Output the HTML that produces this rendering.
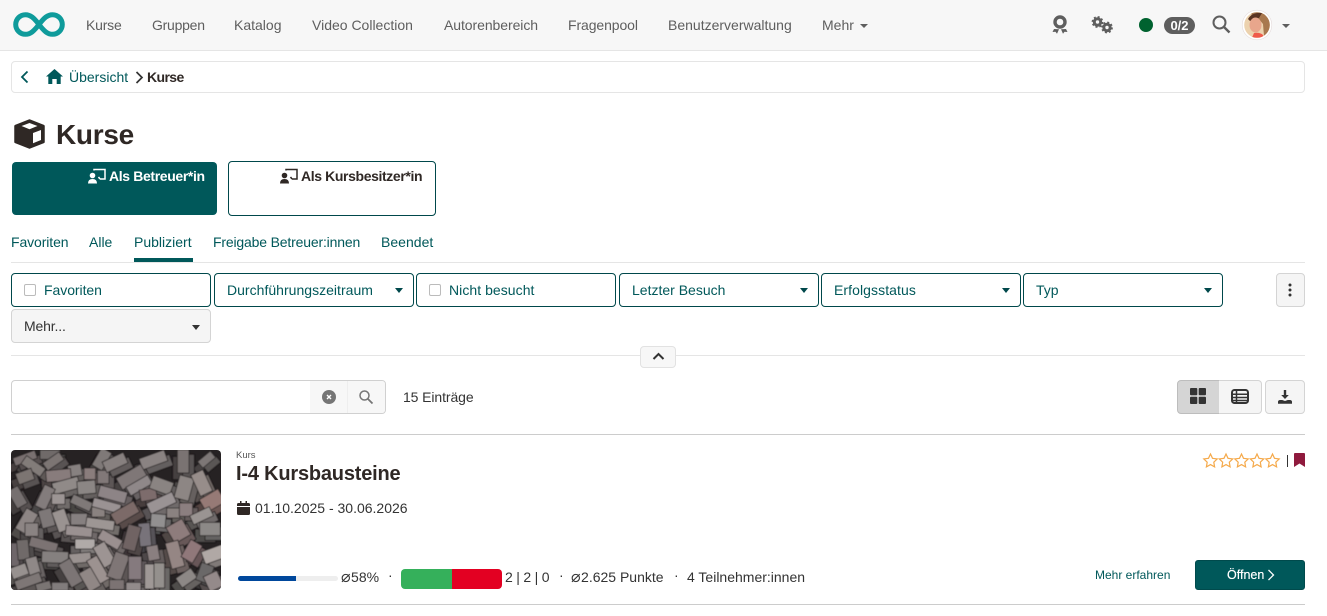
<!DOCTYPE html>
<html lang="de"><head><meta charset="utf-8"><title>Kurse</title>
<style>
html,body{margin:0;padding:0;background:#fff}
body{position:relative;width:1327px;height:616px;overflow:hidden;font-family:"Liberation Sans",Arial,sans-serif;font-size:14px;color:#333}
.a{position:absolute;box-sizing:border-box}
.t{position:absolute;white-space:nowrap;line-height:20px;height:20px}
.n{color:#5e5e5e;top:15px}
.g{color:#00585a}
.f{position:absolute;box-sizing:border-box;top:273px;height:34px;width:200px;border:1px solid #00484b;border-radius:4px}
.c{position:absolute;width:0;height:0;border-left:4px solid transparent;border-right:4px solid transparent;border-top:5px solid #00484b}
.k{position:absolute;box-sizing:border-box;top:284px;width:12px;height:12px;border:1px solid #bbb;border-radius:2px;background:#fff}
.l{position:absolute;height:1px;left:11px;width:1294px}
.d{font-size:16px;font-family:"DejaVu Sans",sans-serif;margin-right:-3.500px;line-height:14px}
svg{position:absolute;display:block;overflow:visible}
</style></head><body>

<div class="a" style="left:0;top:0;width:1327px;height:51px;background:#f7f7f7;border-bottom:1px solid #e5e5e5"></div>
<svg style="left:13px;top:12px" width="52" height="25" viewBox="0 0 52 25"><path d="M26 12.5C21 6 17.500 2.700 12.500 2.700A9.800 9.800 0 0 0 12.500 22.300C17.500 22.300 21 19 26 12.500C31 6 34.500 2.700 39.500 2.700A9.800 9.800 0 0 1 39.500 22.300C34.500 22.300 31 19 26 12.500Z" fill="none" stroke="#0f9b9b" stroke-width="5"/></svg>

<div class="t n" style="left:86px;letter-spacing:-.2px">Kurse</div>
<div class="t n" style="left:152px;letter-spacing:-.25px">Gruppen</div>
<div class="t n" style="left:234px">Katalog</div>
<div class="t n" style="left:312px">Video Collection</div>
<div class="t n" style="left:444px;letter-spacing:-.07px">Autorenbereich</div>
<div class="t n" style="left:568px;letter-spacing:-.1px">Fragenpool</div>
<div class="t n" style="left:668px">Benutzerverwaltung</div>
<div class="t n" style="left:822px">Mehr</div>
<div class="c" style="left:860px;top:24px;border-top:4px solid #5e5e5e"></div>

<svg style="left:1052px;top:15px" width="16" height="20" viewBox="0 0 16 20"><circle cx="8" cy="7" r="5" fill="none" stroke="#5e5e5e" stroke-width="3.400"/><path d="M2 14l-1.500 3 3-.3 1.500 2 2-4.500M14 14l1.500 3-3-.3-1.500 2-2-4.500" fill="#5e5e5e"/></svg>
<svg style="left:1091px;top:16px" width="22" height="18" viewBox="0 0 22 18"><g fill="none" stroke="#5e5e5e"><circle cx="6.500" cy="6" r="3.200" stroke-width="3"/><circle cx="6.500" cy="6" r="5" stroke-width="1.800" stroke-dasharray="2 1.930"/><circle cx="16" cy="11.500" r="3.200" stroke-width="3"/><circle cx="16" cy="11.500" r="5" stroke-width="1.800" stroke-dasharray="2 1.930"/></g></svg>
<div class="a" style="left:1139px;top:18px;width:14px;height:14px;border-radius:50%;background:#00622f"></div>
<div class="a" style="left:1164px;top:17px;width:31px;height:17px;border-radius:9px;background:#5e5e5e;color:#fff;font-weight:bold;font-size:13px;line-height:17px;text-align:center">0/2</div>
<svg style="left:1212px;top:15px" width="19" height="19" viewBox="0 0 19 19"><circle cx="7.500" cy="7.500" r="6" fill="none" stroke="#5e5e5e" stroke-width="2"/><path d="M12 12l5.500 5.500" stroke="#5e5e5e" stroke-width="2.400"/></svg>

<svg style="left:1242px;top:10px" width="30" height="30" viewBox="0 0 30 30">
<defs><clipPath id="av"><circle cx="15" cy="15" r="12.800"/></clipPath></defs>
<circle cx="15" cy="15" r="14.800" fill="#fff" stroke="#e4dcdc" stroke-width=".6"/>
<g clip-path="url(#av)"><rect width="30" height="30" fill="#ecd2ae"/><path d="M9 1h13l6 9v15l-6 1-1-12-5-6-6 0z" fill="#a8784e"/><path d="M6 9q4-7 14-6l-3 5-9 3z" fill="#5a3423"/><ellipse cx="13.500" cy="15" rx="6" ry="7.500" fill="#e8a68c"/><path d="M12 23q6-1 9 2l2 5H9z" fill="#ef5a4a"/></g>
</svg>
<div class="c" style="left:1282px;top:24px;border-top:4px solid #5e5e5e"></div>

<div class="a" style="left:11px;top:61px;width:1294px;height:32px;border:1px solid #e5e5e5;border-radius:4px"></div>
<svg style="left:20px;top:70px" width="10" height="14" viewBox="0 0 10 14"><path d="M7.500 1.500L2 7l5.500 5.500" fill="none" stroke="#00585a" stroke-width="1.800"/></svg>
<svg style="left:46px;top:69px" width="17" height="15" viewBox="0 0 17 15"><path d="M8.500 0L17 7.500h-2.300V15h-4v-5H6.300v5h-4V7.500H0z" fill="#00585a"/></svg>
<div class="t g" style="left:69px;top:67px">Übersicht</div>
<svg style="left:135px;top:71px" width="9" height="13" viewBox="0 0 9 13"><path d="M1.500 1L7 6.500 1.500 12" fill="none" stroke="#333" stroke-width="1.700"/></svg>
<div class="t" style="left:147px;top:67px;font-weight:bold;color:#2f2825;letter-spacing:-.6px">Kurse</div>

<svg style="left:14px;top:119px" width="31" height="30" viewBox="0 0 31 30"><path d="M15.500 1.500L29.500 7v16l-14 5.500L1.500 23V7z" fill="#2f2825" stroke="#2f2825" stroke-width="2.500" stroke-linejoin="round"/><path d="M15.500 4L23.500 7 15.500 10.200 7.500 7z" fill="#fff"/><path d="M19 14l8-3v10l-8 3.200z" fill="#fff"/></svg>
<div class="t" style="left:56px;top:120px;height:30px;line-height:30px;font-size:28px;font-weight:bold;color:#2f2825;letter-spacing:-.3px">Kurse</div>

<div class="a" style="left:12px;top:162px;width:205px;height:53px;background:#00585a;border-radius:4px"></div>
<svg style="left:88px;top:168px" width="18" height="16" viewBox="0 0 18 16"><path d="M6 2.500V1.500h11v9.500h-5M12 11l-1.500-2" fill="none" stroke="#fff" stroke-width="1.500"/><circle cx="4.500" cy="7.500" r="2.800" fill="#fff"/><path d="M0 15.500q0-4.500 4.500-4.500t4.500 4.500z" fill="#fff"/></svg>
<div class="t" style="left:109px;top:166px;color:#fff;font-weight:bold;letter-spacing:-.36px">Als Betreuer*in</div>
<div class="a" style="left:228px;top:161px;width:208px;height:55px;border:1px solid #00484b;border-radius:4px"></div>
<svg style="left:280px;top:168px" width="18" height="16" viewBox="0 0 18 16"><path d="M6 2.500V1.500h11v9.500h-5M12 11l-1.500-2" fill="none" stroke="#2f2825" stroke-width="1.500"/><circle cx="4.500" cy="7.500" r="2.800" fill="#2f2825"/><path d="M0 15.500q0-4.500 4.500-4.500t4.500 4.500z" fill="#2f2825"/></svg>
<div class="t" style="left:301px;top:166px;color:#2f2825;font-weight:bold;letter-spacing:-.38px">Als Kursbesitzer*in</div>

<div class="t g" style="left:11px;top:232px;letter-spacing:-.1px">Favoriten</div>
<div class="t g" style="left:89px;top:232px">Alle</div>
<div class="t g" style="left:134px;top:232px">Publiziert</div>
<div class="t g" style="left:213px;top:232px;letter-spacing:-.17px">Freigabe Betreuer:innen</div>
<div class="t g" style="left:381px;top:232px;letter-spacing:.02px">Beendet</div>
<div class="l" style="top:262px;background:#e5e5e5"></div>
<div class="a" style="left:134px;top:258px;width:59px;height:4px;background:#00585a"></div>

<div class="f" style="left:11px"></div><div class="k" style="left:24px"></div><div class="t g" style="left:44px;top:280px;letter-spacing:-.05px">Favoriten</div>
<div class="f" style="left:214px"></div><div class="t g" style="left:227px;top:280px;letter-spacing:.02px">Durchführungszeitraum</div><div class="c" style="left:395px;top:288px"></div>
<div class="f" style="left:416px"></div><div class="k" style="left:429px"></div><div class="t g" style="left:449px;top:280px;letter-spacing:.05px">Nicht besucht</div>
<div class="f" style="left:619px"></div><div class="t g" style="left:632px;top:280px">Letzter Besuch</div><div class="c" style="left:800px;top:288px"></div>
<div class="f" style="left:821px"></div><div class="t g" style="left:834px;top:280px;letter-spacing:.08px">Erfolgsstatus</div><div class="c" style="left:1002px;top:288px"></div>
<div class="f" style="left:1023px"></div><div class="t g" style="left:1036px;top:280px">Typ</div><div class="c" style="left:1204px;top:288px"></div>
<div class="a" style="left:1276px;top:273px;width:29px;height:34px;background:#f5f5f5;border:1px solid #d4d4d4;border-radius:4px"></div>
<svg style="left:1288px;top:283px" width="4" height="14" viewBox="0 0 4 14"><circle cx="2" cy="2" r="1.500" fill="#333"/><circle cx="2" cy="7" r="1.500" fill="#333"/><circle cx="2" cy="12" r="1.500" fill="#333"/></svg>
<div class="a" style="left:11px;top:309px;width:200px;height:34px;background:#f5f5f5;border:1px solid #d4d4d4;border-radius:4px"></div>
<div class="t" style="left:24px;top:316px;letter-spacing:-.15px">Mehr...</div>
<div class="c" style="left:192px;top:325px;border-top-color:#333"></div>

<div class="l" style="top:355px;background:#e5e5e5"></div>
<div class="a" style="left:640px;top:346px;width:36px;height:22px;background:#f7f7f7;border:1px solid #e2e2e2;border-radius:4px"></div>
<svg style="left:652px;top:352px" width="13" height="9" viewBox="0 0 13 9"><path d="M1.500 7L6.500 2l5 5" fill="none" stroke="#333" stroke-width="2"/></svg>

<div class="a" style="left:11px;top:380px;width:375px;height:34px;border:1px solid #d0d0d0;border-radius:4px;background:#fff"></div>
<div class="a" style="left:310px;top:381px;width:75px;height:32px;background:#f7f7f7;border-radius:0 3px 3px 0"></div>
<div class="a" style="left:347px;top:381px;width:1px;height:32px;background:#eee"></div>
<svg style="left:322px;top:390px" width="14" height="14" viewBox="0 0 14 14"><circle cx="7" cy="7" r="7" fill="#757575"/><path d="M5 5l4 4M9 5l-4 4" stroke="#fff" stroke-width="1.400"/></svg>
<svg style="left:359px;top:390px" width="14" height="14" viewBox="0 0 14 14"><circle cx="5.500" cy="5.500" r="4.500" fill="none" stroke="#757575" stroke-width="1.500"/><path d="M9 9l4.500 4.500" stroke="#757575" stroke-width="1.800"/></svg>
<div class="t" style="left:403px;top:387px;letter-spacing:-.1px">15 Einträge</div>

<div class="a" style="left:1177px;top:380px;width:43px;height:34px;background:#d5d5d5;border:1px solid #bdbdbd;border-radius:4px 0 0 4px"></div>
<div class="a" style="left:1219px;top:380px;width:43px;height:34px;background:#f5f5f5;border:1px solid #d4d4d4;border-left:0;border-radius:0 4px 4px 0"></div>
<div class="a" style="left:1265px;top:380px;width:40px;height:34px;background:#f5f5f5;border:1px solid #d4d4d4;border-radius:4px"></div>
<svg style="left:1190px;top:388px" width="16" height="16" viewBox="0 0 16 16"><g fill="#333"><rect width="7.300" height="7.300" rx="1"/><rect x="8.700" width="7.300" height="7.300" rx="1"/><rect y="8.700" width="7.300" height="7.300" rx="1"/><rect x="8.700" y="8.700" width="7.300" height="7.300" rx="1"/></g></svg>
<svg style="left:1231px;top:389px" width="18" height="15" viewBox="0 0 18 15"><rect x="1" y="1" width="16" height="13" rx="2.500" fill="none" stroke="#333" stroke-width="2"/><path d="M1 5.200h16M1 8.500h16M1 11.500h16M5.500 1v13" stroke="#333" stroke-width="1.500"/></svg>
<svg style="left:1278px;top:390px" width="14" height="14" viewBox="0 0 14 14"><path d="M5.800 0h2.400v5h2.600L7 9 3.200 5h2.600z" fill="#333"/><path d="M0 13.800v-2c0-1.200 1-1.800 2-1.800h2.200L7 11l2.800-1H12c1 0 2 .6 2 1.800v2z" fill="#333"/></svg>

<div class="l" style="top:434px;background:#ccc"></div>

<svg style="left:11px;top:450px" width="210" height="140" viewBox="3 6 630 420">
<defs><clipPath id="im"><rect x="3" y="6" width="630" height="420" rx="12"/></clipPath><filter id="bl" x="0" y="0" width="1" height="1"><feGaussianBlur stdDeviation="1.500"/></filter>
<filter id="dk" x="-.1" y="-.1" width="1.200" height="1.200"><feColorMatrix type="matrix" values=".3 0 0 0 0 0 .3 0 0 0 0 0 .3 0 0 0 0 0 1 0"/></filter>
<filter id="dk2" x="-.1" y="-.1" width="1.200" height="1.200"><feColorMatrix type="matrix" values=".5 0 0 0 0 0 .5 0 0 0 0 0 .5 0 0 0 0 0 1 0"/></filter>
<g id="br" stroke="#2a2627" stroke-width="2.500">
<rect x="90" y="6" width="60" height="28" fill="#6f6a69"/><rect x="10" y="18" width="70" height="25" fill="#797070" transform="rotate(-20 45 30)"/>
<rect x="100" y="26" width="60" height="28" fill="#7b7473" transform="rotate(-35 130 40)"/><rect x="258" y="3" width="35" height="60" fill="#7f7978" transform="rotate(30 275 33)"/>
<rect x="502" y="5" width="35" height="70" fill="#7a7372"/><rect x="565" y="22" width="50" height="25" fill="#7d7776" transform="rotate(-40 590 35)"/>
<rect x="35" y="40" width="70" height="30" fill="#827b79" transform="rotate(35 70 55)"/><rect x="20" y="68" width="50" height="35" fill="#7c7472" transform="rotate(-20 45 85)"/>
<rect x="175" y="50" width="40" height="35" fill="#878180" transform="rotate(-10 195 68)"/><rect x="222" y="60" width="35" height="35" fill="#8a7d7c"/><rect x="262" y="67" width="35" height="40" fill="#817878"/>
<rect x="108" y="65" width="75" height="35" fill="#887b7b" transform="rotate(-5 145 82)"/>
<rect x="280" y="26" width="70" height="35" fill="#87807f" transform="rotate(-25 315 43)"/><rect x="390" y="18" width="80" height="35" fill="#8a8382" transform="rotate(-20 430 35)"/>
<rect x="322" y="67" width="85" height="40" fill="#7f7777" transform="rotate(-30 365 87)"/>
<rect x="128" y="95" width="80" height="35" fill="#908a88" transform="rotate(-15 168 112)"/><rect x="202" y="98" width="55" height="40" fill="#8b8684" transform="rotate(-5 230 118)"/>
<rect x="350" y="97" width="75" height="30" fill="#8f8889" transform="rotate(-30 388 112)"/><rect x="390" y="122" width="50" height="35" fill="#7d6c6c" transform="rotate(-10 415 140)"/><rect x="422" y="93" width="65" height="40" fill="#8a8482" transform="rotate(20 455 113)"/>
<rect x="500" y="85" width="45" height="70" fill="#8d8684" transform="rotate(15 522 120)"/><rect x="555" y="70" width="40" height="70" fill="#978d8a" transform="rotate(-25 575 105)"/>
<rect x="88" y="113" width="35" height="70" fill="#837c7c" transform="rotate(25 105 148)"/><rect x="5" y="118" width="35" height="60" fill="#76706f" transform="rotate(-30 22 148)"/>
<rect x="125" y="137" width="40" height="32" fill="#9c9594"/><rect x="182" y="151" width="65" height="28" fill="#7f7978" transform="rotate(25 215 165)"/>
<rect x="265" y="122" width="85" height="35" fill="#8d8486" transform="rotate(15 308 140)"/><rect x="245" y="177" width="40" height="30" fill="#8a8280"/>
<rect x="247" y="159" width="85" height="28" fill="#9a9293" transform="rotate(15 290 173)"/>
<rect x="305" y="176" width="80" height="38" fill="#7b6a68" transform="rotate(-30 345 195)"/>
<rect x="412" y="147" width="85" height="35" fill="#9a9394" transform="rotate(-25 455 165)"/><rect x="470" y="180" width="40" height="30" fill="#8a8280"/>
<rect x="508" y="165" width="40" height="40" fill="#8c7f80"/><rect x="575" y="137" width="65" height="45" fill="#967a76" transform="rotate(-30 605 160)"/>
<rect x="542" y="188" width="65" height="30" fill="#9a9492" transform="rotate(-25 575 203)"/>
<rect x="30" y="185" width="40" height="70" fill="#8d8584" transform="rotate(30 50 220)"/><rect x="45" y="225" width="40" height="40" fill="#8a8382"/><rect x="90" y="183" width="40" height="55" fill="#7e7878" transform="rotate(-15 110 210)"/>
<rect x="135" y="185" width="40" height="65" fill="#9a9391" transform="rotate(-20 155 218)"/><rect x="182" y="196" width="50" height="35" fill="#868080"/>
<rect x="167" y="235" width="80" height="30" fill="#9a9191" transform="rotate(5 207 250)"/><rect x="228" y="213" width="85" height="30" fill="#9d9694" transform="rotate(8 270 228)"/>
<rect x="422" y="198" width="45" height="40" fill="#929090" transform="rotate(5 445 218)"/><rect x="478" y="222" width="55" height="55" fill="#8e7c7b" transform="rotate(-30 505 250)"/><rect x="569" y="223" width="62" height="40" fill="#8c8987"/>
<rect x="387" y="225" width="35" height="70" fill="#78737a" transform="rotate(-5 405 260)"/><rect x="345" y="232" width="40" height="75" fill="#6f6364" transform="rotate(15 365 270)"/>
<rect x="265" y="259" width="70" height="32" fill="#9a8f8f" transform="rotate(30 300 275)"/><rect x="195" y="273" width="60" height="30" fill="#b0aaa8"/>
<rect x="58" y="275" width="85" height="30" fill="#7b7373" transform="rotate(15 100 290)"/><rect x="3" y="285" width="25" height="70" fill="#6e6669"/><rect x="22" y="275" width="35" height="60" fill="#6f6a69" transform="rotate(-5 40 305)"/>
<rect x="263" y="285" width="40" height="70" fill="#9d9493" transform="rotate(-30 283 320)"/><rect x="178" y="315" width="65" height="30" fill="#9a9290" transform="rotate(-5 210 330)"/><rect x="95" y="310" width="80" height="35" fill="#85807f" transform="rotate(2 135 328)"/>
<rect x="412" y="292" width="35" height="45" fill="#8a7f80" transform="rotate(-10 430 315)"/><rect x="475" y="280" width="40" height="80" fill="#958684" transform="rotate(-15 495 320)"/><rect x="525" y="280" width="40" height="60" fill="#90787a" transform="rotate(30 545 310)"/>
<rect x="578" y="300" width="65" height="40" fill="#b0a8a5" transform="rotate(-20 610 320)"/>
<rect x="52" y="327" width="35" height="55" fill="#8f8887" transform="rotate(-15 70 355)"/><rect x="3" y="352" width="50" height="35" fill="#97918f" transform="rotate(-20 28 370)"/>
<rect x="162" y="335" width="40" height="80" fill="#7b7574" transform="rotate(-30 182 375)"/><rect x="247" y="325" width="35" height="80" fill="#9c9290" transform="rotate(-30 265 365)"/><rect x="302" y="315" width="45" height="80" fill="#7f7676" transform="rotate(20 325 355)"/><rect x="355" y="325" width="40" height="70" fill="#857a7e"/>
<rect x="15" y="385" width="80" height="30" fill="#7e7776" transform="rotate(-20 55 400)"/><rect x="220" y="362" width="40" height="65" fill="#908785" transform="rotate(-30 240 395)"/>
<rect x="404" y="348" width="32" height="75" fill="#9f9896"/><rect x="432" y="345" width="32" height="75" fill="#94908d"/><rect x="502" y="372" width="55" height="35" fill="#8d8886" transform="rotate(-35 530 390)"/>
<rect x="565" y="348" width="40" height="55" fill="#6a6767" transform="rotate(20 585 375)"/><rect x="588" y="375" width="45" height="50" fill="#948a8a" transform="rotate(-25 610 400)"/>
<rect x="298" y="395" width="45" height="30" fill="#7b7373"/><rect x="348" y="403" width="45" height="25" fill="#928b8b"/><rect x="125" y="403" width="50" height="25" fill="#817c7c"/><rect x="78" y="403" width="45" height="25" fill="#7a7473" transform="rotate(-15 100 415)"/>
</g></defs>
<g clip-path="url(#im)"><rect x="3" y="6" width="630" height="420" fill="#262223"/>
<g filter="url(#bl)">
<use href="#br" transform="translate(-14 20)" filter="url(#dk)"/>
<use href="#br" transform="translate(16 14)" filter="url(#dk2)"/>
<use href="#br"/>
</g></g></svg>

<div class="t" style="left:236px;top:446px;font-size:9.500px;color:#555">Kurs</div>
<div class="t" style="left:236px;top:462px;height:24px;line-height:24px;font-size:20px;font-weight:bold;color:#2f2825;letter-spacing:-.2px">I-4 Kursbausteine</div>
<svg style="left:237px;top:501px" width="13" height="14" viewBox="0 0 13 14"><path d="M3 0h1.500v2h4V0H10v2h1.500A1.500 1.500 0 0 1 13 3.500V5H0V3.500A1.500 1.500 0 0 1 1.500 2H3zM0 6h13v6.500a1.500 1.500 0 0 1-1.500 1.500h-10A1.500 1.500 0 0 1 0 12.500z" fill="#2f2825"/></svg>
<div class="t" style="left:255px;top:498px">01.10.2025 - 30.06.2026</div>

<svg style="left:1203px;top:453px" width="78" height="15" viewBox="0 0 78 15"><defs><path id="st" d="M7.500 1l2 4.300 4.700.6-3.400 3.300.8 4.700-4.100-2.300-4.100 2.300.8-4.700L.8 5.900l4.700-.6z" fill="none" stroke="#f5a94a" stroke-width="1.200"/></defs><use href="#st"/><use href="#st" x="15.500"/><use href="#st" x="31"/><use href="#st" x="46.500"/><use href="#st" x="62"/></svg>
<div class="a" style="left:1287px;top:455px;width:1px;height:12px;background:#333"></div>
<svg style="left:1294px;top:453px" width="11" height="14" viewBox="0 0 11 14"><path d="M0 1a1 1 0 0 1 1-1h9a1 1 0 0 1 1 1v13L5.500 10.500 0 14z" fill="#8f1a3d"/></svg>

<div class="a" style="left:238px;top:576px;width:100px;height:5px;background:#eee;border-radius:3px"></div>
<div class="a" style="left:238px;top:576px;width:58px;height:5px;background:#00489c;border-radius:3px 0 0 3px"></div>
<div class="t" style="left:341px;top:567px"><span class="d">⌀</span> 58%</div>
<div class="t" style="left:388px;top:565px">·</div>
<div class="a" style="left:401px;top:569px;width:51px;height:20px;background:#35b05b;border-radius:4px 0 0 4px"></div>
<div class="a" style="left:452px;top:569px;width:50px;height:20px;background:#e30022;border-radius:0 4px 4px 0"></div>
<div class="t" style="left:505px;top:567px;letter-spacing:-.2px">2 | 2 | 0</div>
<div class="t" style="left:559px;top:565px">·</div>
<div class="t" style="left:571px;top:567px"><span class="d">⌀</span> 2.625 Punkte</div>
<div class="t" style="left:674px;top:565px">·</div>
<div class="t" style="left:687px;top:567px">4 Teilnehmer:innen</div>

<div class="t g" style="left:1095px;top:565px;font-size:12px">Mehr erfahren</div>
<div class="a" style="left:1195px;top:560px;width:110px;height:30px;background:#00585a;border-radius:3px;border:1px solid #004a4c"></div>
<div class="t" style="left:1227px;top:565px;font-size:12.500px;color:#fff;text-shadow:0 0 .4px #fff">Öffnen</div>
<svg style="left:1267px;top:569px" width="8" height="12" viewBox="0 0 8 12"><path d="M1.500 1l5 5-5 5" fill="none" stroke="#fff" stroke-width="1.300"/></svg>
<div class="l" style="top:604px;background:#ccc"></div>

</body></html>
